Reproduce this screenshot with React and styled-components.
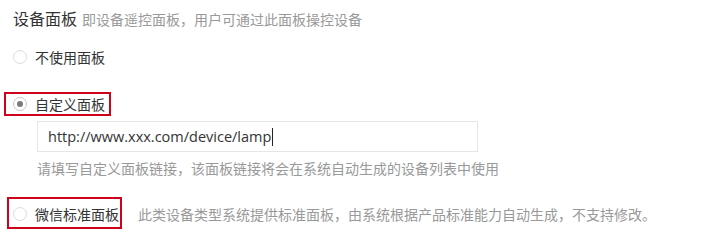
import React, { useState } from "react";
import styled, { createGlobalStyle } from "styled-components";

const GlobalStyle = createGlobalStyle`
  body {
    margin: 0;
    background: #fff;
    font-family: "Noto Sans CJK SC", "Liberation Sans", sans-serif;
    color: #333;
  }
`;

const Page = styled.div`
  padding: 8px 0 0 13px;
  width: 705px;
  height: 247px;
  box-sizing: border-box;
`;

const Header = styled.div`
  display: flex;
  align-items: baseline;
  gap: 5px;
  height: 20px;
  line-height: 20px;
`;

const Title = styled.span`
  font-size: 16px;
  color: #333;
`;

const Note = styled.span`
  font-size: 14px;
  color: #999;
  line-height: 20px;
`;

const Row = styled.div`
  display: flex;
  align-items: center;
  margin-top: ${p => p.$top}px;
`;

const Option = styled.label`
  position: relative;
  display: flex;
  align-items: center;
  gap: 8px;
  height: 20px;
  font-size: 14px;
  color: #333;
  cursor: pointer;

  ${p => p.$mark && `
    &::after {
      content: "";
      position: absolute;
      top: ${p.$mark[0]}px;
      right: ${p.$mark[1]}px;
      bottom: ${p.$mark[2]}px;
      left: ${p.$mark[3]}px;
      border: 2px solid #d0021b;
      pointer-events: none;
    }
  `}
`;

const Radio = styled.span`
  width: 14px;
  height: 14px;
  box-sizing: border-box;
  border-radius: 50%;
  border: 1px solid ${p => (p.$checked ? "#c8c8c8" : "#dcdcdc")};
  display: flex;
  align-items: center;
  justify-content: center;

  &::before {
    content: "";
    width: 6px;
    height: 6px;
    border-radius: 50%;
    background: ${p => (p.$checked ? "#7a7a7a" : "transparent")};
  }
`;

const Indent = styled.div`
  padding-left: 24px;
`;

const Input = styled.div`
  margin-top: 7px;
  width: 441px;
  height: 31px;
  box-sizing: border-box;
  border: 1px solid #e6e6e6;
  display: flex;
  align-items: center;
  padding-left: 10px;
  font-family: "Open Sans", "Liberation Sans", sans-serif;
  font-size: 14.5px;
  color: #333;
`;

const Caret = styled.span`
  display: inline-block;
  width: 1px;
  height: 18px;
  background: #222;
  margin-left: 1px;
`;

const Hint = styled.div`
  margin-top: 6px;
  font-size: 14px;
  line-height: 20px;
  color: #999;
`;

const SideNote = styled(Note)`
  margin-left: 19px;
`;

const options = [
  { key: "none", label: "不使用面板" },
  { key: "custom", label: "自定义面板" },
  { key: "wechat", label: "微信标准面板" },
];

export default function App() {
  const [value] = useState("custom");

  return (
    <Page>
      <GlobalStyle />
      <Header>
        <Title>设备面板</Title>
        <Note>即设备遥控面板，用户可通过此面板操控设备</Note>
      </Header>

      <Row $top={19}>
        <Option>
          <Radio $checked={value === options[0].key} />
          {options[0].label}
        </Option>
      </Row>

      <Row $top={27}>
        <Option $mark={[-2, -6, -2, -9]}>
          <Radio $checked={value === options[1].key} />
          {options[1].label}
        </Option>
      </Row>

      <Indent>
        <Input>
          http://www.xxx.com/device/lamp
          <Caret />
        </Input>
        <Hint>请填写自定义面板链接，该面板链接将会在系统自动生成的设备列表中使用</Hint>
      </Indent>

      <Row $top={26}>
        <Option $mark={[-7, -3, -5, -6]}>
          <Radio $checked={value === options[2].key} />
          {options[2].label}
        </Option>
        <SideNote>此类设备类型系统提供标准面板，由系统根据产品标准能力自动生成，不支持修改。</SideNote>
      </Row>
    </Page>
  );
}
